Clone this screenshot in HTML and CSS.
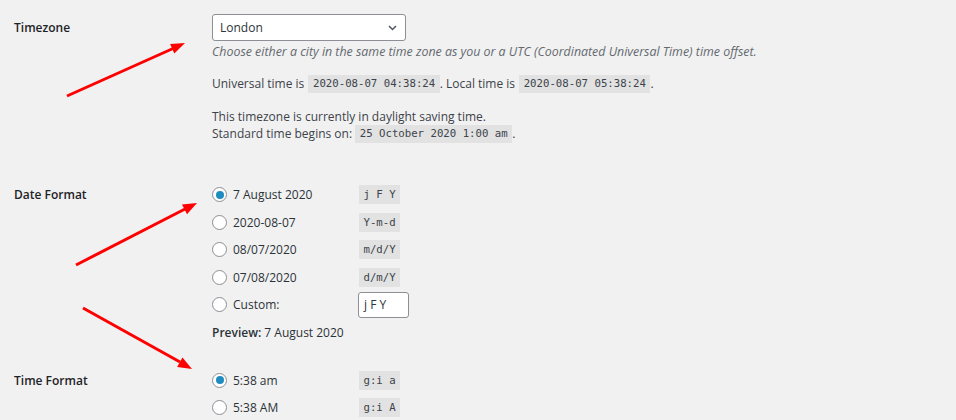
FILE: index.html
```html
<!DOCTYPE html>
<html lang="en">
<head>
    <meta charset="UTF-8">
    <meta name="viewport" content="width=device-width, initial-scale=1.0">
    <title>General Settings</title>
    <link rel="stylesheet" href="styles.css">
</head>
<body>
    <div class="settings">
        <div class="row row-timezone">
            <div class="row-label">Timezone</div>
            <div class="row-field">
                <div class="select-box">
                    <span>London</span>
                    <svg class="chevron" width="9" height="6" viewBox="0 0 9 6"><path d="M1 1 L4.5 4.5 L8 1" fill="none" stroke="#50575e" stroke-width="1.5"/></svg>
                </div>
                <p class="description">Choose either a city in the same time zone as you or a UTC (Coordinated Universal Time) time offset.</p>
                <p class="times">Universal time is <code>2020-08-07 04:38:24</code>. Local time is <code>2020-08-07 05:38:24</code>.</p>
                <p class="dst">This timezone is currently in daylight saving time.<br>Standard time begins on: <code>25 October 2020 1:00 am</code>.</p>
            </div>
        </div>

        <div class="row row-date">
            <div class="row-label">Date Format</div>
            <div class="row-field">
                <label class="choice"><span class="radio checked"></span><span class="choice-text">7 August 2020</span><code>j F Y</code></label>
                <label class="choice"><span class="radio"></span><span class="choice-text">2020-08-07</span><code>Y-m-d</code></label>
                <label class="choice"><span class="radio"></span><span class="choice-text">08/07/2020</span><code>m/d/Y</code></label>
                <label class="choice"><span class="radio"></span><span class="choice-text">07/08/2020</span><code>d/m/Y</code></label>
                <label class="choice"><span class="radio"></span><span class="choice-text">Custom:</span><span class="custom-input">j F Y</span></label>
                <p class="preview"><strong>Preview:</strong> 7 August 2020</p>
            </div>
        </div>

        <div class="row row-time">
            <div class="row-label">Time Format</div>
            <div class="row-field">
                <label class="choice"><span class="radio checked"></span><span class="choice-text">5:38 am</span><code>g:i a</code></label>
                <label class="choice"><span class="radio"></span><span class="choice-text">5:38 AM</span><code>g:i A</code></label>
            </div>
        </div>
    </div>

    <svg class="arrows" width="956" height="420" viewBox="0 0 956 420">
        <g fill="#f00" stroke="none">
            <line x1="67" y1="96" x2="173" y2="48.5" stroke="#f00" stroke-width="3"/>
            <polygon points="185,43 174.3,53.5 170.1,44"/>
            <line x1="76" y1="265" x2="185" y2="209" stroke="#f00" stroke-width="3"/>
            <polygon points="197,203 187,214.3 182,204.5"/>
            <line x1="83" y1="308" x2="180" y2="362" stroke="#f00" stroke-width="3"/>
            <polygon points="192,369 177.1,367 182.5,357.4"/>
        </g>
    </svg>
</body>
</html>
```

FILE: styles.css
```css
body {
    margin: 0;
    background-color: #f1f1f1;
    font-family: "Open Sans", "Noto Sans", sans-serif;
    font-size: 12px;
    color: #3c434a;
    width: 956px;
    height: 420px;
    overflow: hidden;
    position: relative;
}

.settings {
    padding-left: 14px;
}

.row {
    display: grid;
    grid-template-columns: 198px 1fr;
}

.row-label {
    font-weight: 600;
    color: #1d2327;
    line-height: 28px;
}

.row-timezone {
    padding-top: 14px;
}

.row-date {
    padding-top: 38px;
}

.row-time {
    padding-top: 26px;
}

.select-box {
    box-sizing: border-box;
    width: 194px;
    height: 27px;
    background-color: #fff;
    border: 1px solid #8c8f94;
    border-radius: 3px;
    display: flex;
    align-items: center;
    justify-content: space-between;
    padding: 0 8px 0 7px;
    color: #2c3338;
}

p {
    margin: 0;
}

.description {
    margin-top: 3px;
    line-height: 16px;
    font-size: 12.4px;
    font-style: italic;
    color: #646970;
}

.times {
    margin-top: 15px;
    line-height: 18px;
}

.dst {
    margin-top: 15px;
    line-height: 17px;
}

code {
    display: inline-block;
    font-family: "DejaVu Sans Mono", "Liberation Mono", monospace;
    font-size: 10.7px;
    line-height: 18px;
    padding: 0 4.5px;
    background-color: #e2e2e2;
    color: #3c434a;
    vertical-align: top;
}

.times code {
    margin-left: 1px;
}

.choice {
    display: flex;
    align-items: center;
    height: 27.5px;
}

.radio {
    box-sizing: border-box;
    width: 15px;
    height: 15px;
    border: 1px solid #8c8f94;
    border-radius: 50%;
    background-color: #fff;
    display: flex;
    align-items: center;
    justify-content: center;
}

.radio.checked::before {
    content: "";
    width: 8px;
    height: 8px;
    border-radius: 50%;
    background-color: #1e8cbe;
}

.choice-text {
    width: 126px;
    margin-left: 6px;
    color: #2c3338;
}

.choice code {
    line-height: 19px;
}

.custom-input {
    box-sizing: border-box;
    width: 51px;
    height: 26px;
    margin-left: -1px;
    background-color: #fff;
    border: 1px solid #8c8f94;
    border-radius: 3px;
    padding: 0 5px;
    line-height: 24px;
    color: #2c3338;
}

.preview {
    margin-top: 5px;
    line-height: 17px;
    color: #2c3338;
}

.preview strong {
    font-weight: 600;
}

.arrows {
    position: absolute;
    left: 0;
    top: 0;
    pointer-events: none;
}
```
